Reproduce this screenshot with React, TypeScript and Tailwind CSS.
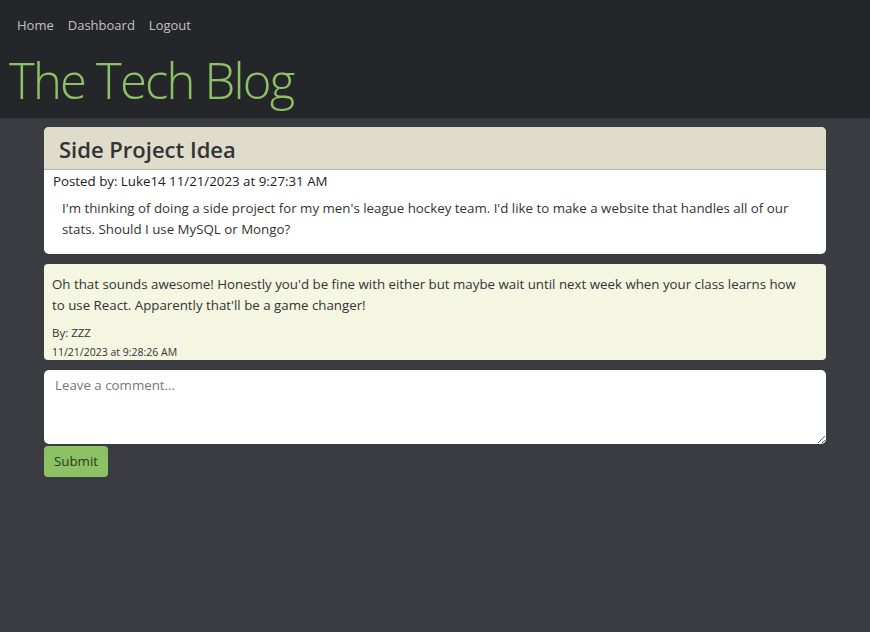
import React from "react";

const font = { fontFamily: '"Open Sans", "Noto Sans", sans-serif' };

export default function App() {
  return (
    <div className="min-h-[632px] bg-[#3b3c41] text-[#333]" style={font}>
      {/* Header */}
      <header className="bg-[#25262a] h-[118px] px-[9px] pt-[15px]">
        <nav className="flex gap-[14px] pl-[8px] text-[13px] leading-[20px] text-[#c2c2c2]">
          <a>Home</a>
          <a>Dashboard</a>
          <a>Logout</a>
        </nav>
        <h1 className="mt-[15px] text-[49px] leading-[60px] font-light text-[#8cc263] tracking-[-1.8px]">
          The Tech Blog
        </h1>
      </header>

      <main className="mx-[44px] pt-[9px] w-[782px]">
        {/* Post */}
        <section className="bg-white rounded-[5px] overflow-hidden">
          <div className="bg-[#dfdccb] border-b border-[#b9b6a6] h-[43px] px-[15px] flex items-center">
            <h2 className="text-[22px] leading-[30px] pt-[2px] font-semibold text-[#333]">Side Project Idea</h2>
          </div>
          <div className="px-[9px] pt-[1px] pb-[14px]">
            <p className="text-[13.3px] leading-[20px] text-[#222]">
              Posted by: Luke14 11/21/2023 at 9:27:31 AM
            </p>
            <p className="mt-[7px] px-[9px] text-[13.3px] leading-[21px] text-[#333]">
              I'm thinking of doing a side project for my men's league hockey team. I'd like to make a website that handles all of our stats. Should I use MySQL or Mongo?
            </p>
          </div>
        </section>

        {/* Comment */}
        <section className="mt-[10px] bg-[#f5f6e2] rounded-[4px] px-[8px] pt-[10px] h-[96px]">
          <p className="text-[13.3px] leading-[21px] text-[#333] pr-[10px]">
            Oh that sounds awesome! Honestly you'd be fine with either but maybe wait until next week when your class learns how to use React. Apparently that'll be a game changer!
          </p>
          <p className="mt-[9px] text-[11.5px] leading-[16px] text-[#333]">By: ZZZ</p>
          <p className="mt-[4px] text-[10.5px] leading-[14px] text-[#333]">11/21/2023 at 9:28:26 AM</p>
        </section>

        {/* Comment form */}
        <form className="mt-[10px]">
          <textarea
            placeholder="Leave a comment..."
            className="block w-full h-[74px] bg-white rounded-[5px] px-[11px] py-[6px] text-[13.3px] text-[#333] placeholder:text-[#777] outline-none"
          />
          <button
            type="button"
            className="mt-[2px] bg-[#8cc263] rounded-[4px] h-[31px] px-[10px] text-[13.3px] text-[#2a3a20]"
          >
            Submit
          </button>
        </form>
      </main>
    </div>
  );
}
